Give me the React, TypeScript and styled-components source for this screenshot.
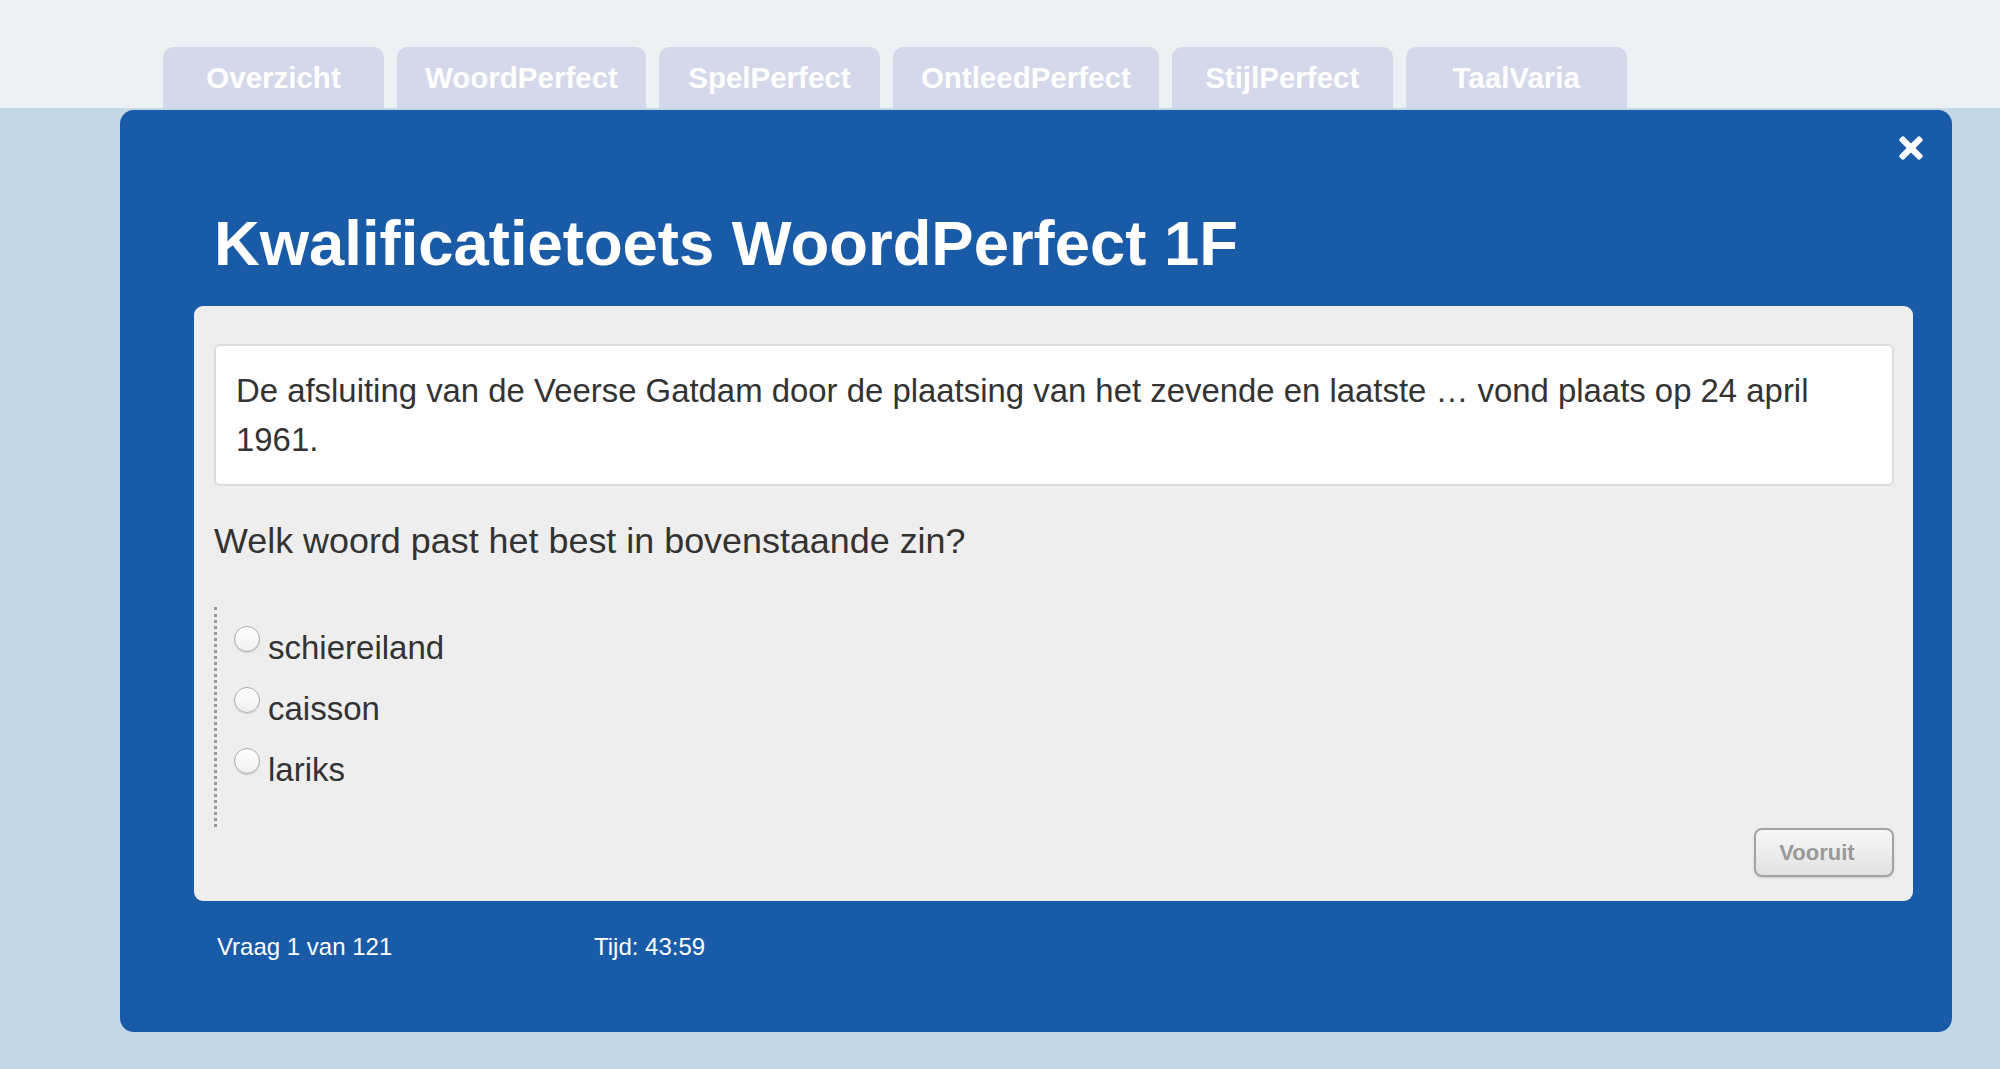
import styled, { createGlobalStyle } from "styled-components";
import { FaTimes } from "react-icons/fa";

const tabs = ["Overzicht", "WoordPerfect", "SpelPerfect", "OntleedPerfect", "StijlPerfect", "TaalVaria"];
const options = ["schiereiland", "caisson", "lariks"];

const GlobalStyle = createGlobalStyle`
    html, body {
        margin: 0;
        padding: 0;
        background: #c3d8e7;
        font-family: "Liberation Sans", Arial, sans-serif;
    }
    * { box-sizing: border-box; }
`;

const App = () => {
    return <Page>
        <GlobalStyle />
        <Header>
            <TabList>
                {tabs.map(tab => <Tab key={tab}>{tab}</Tab>)}
            </TabList>
        </Header>
        <Panel>
            <CloseButton aria-label="Sluiten">
                <FaTimes />
            </CloseButton>
            <Title>Kwalificatietoets WoordPerfect 1F</Title>
            <Card>
                <SentenceBox>
                    De afsluiting van de Veerse Gatdam door de plaatsing van het zevende en laatste … vond plaats op 24 april 1961.
                </SentenceBox>
                <Question>Welk woord past het best in bovenstaande zin?</Question>
                <OptionList>
                    {options.map(option => (
                        <OptionRow key={option}>
                            <Radio />
                            <OptionLabel>{option}</OptionLabel>
                        </OptionRow>
                    ))}
                </OptionList>
                <ButtonRow>
                    <NextButton>Vooruit</NextButton>
                </ButtonRow>
            </Card>
            <Footer>
                <FooterItem $width={377}>Vraag 1 van 121</FooterItem>
                <FooterItem>Tijd: 43:59</FooterItem>
            </Footer>
        </Panel>
    </Page>
};

export default App;

const Page = styled.div({
    minHeight: '1069px',
    paddingBottom: '38px',
});

const Header = styled.div({
    background: '#edf1f4',
    height: '108px',
    paddingTop: '47px',
    paddingLeft: '163px',
});

const TabList = styled.div({
    display: 'flex',
    gap: '13px',
});

const Tab = styled.div({
    minWidth: '221px',
    height: '61px',
    padding: '0 28px',
    display: 'flex',
    alignItems: 'center',
    justifyContent: 'center',
    background: '#d5d8ea',
    borderRadius: '10px 10px 0 0',
    color: 'white',
    fontWeight: 'bold',
    fontSize: '29.5px',
});

const Panel = styled.div({
    position: 'relative',
    marginTop: '2px',
    marginLeft: '120px',
    width: '1832px',
    background: '#1a5ba8',
    borderRadius: '14px',
    padding: '101px 39px 71px 74px',
});

const CloseButton = styled.button({
    position: 'absolute',
    top: '21px',
    right: '24px',
    background: 'transparent',
    border: 'none',
    padding: 0,
    color: 'white',
    fontSize: '34px',
    display: 'flex',
    cursor: 'pointer',
});

const Title = styled.h1({
    margin: '0 0 31px 20px',
    color: 'white',
    fontSize: '63.4px',
    lineHeight: '64px',
    fontWeight: 'bold',
});

const Card = styled.div({
    background: '#eeeeee',
    borderRadius: '9px',
    padding: '38px 19px 24px 20px',
});

const SentenceBox = styled.div({
    background: 'white',
    border: '2px solid #dcdcdc',
    borderRadius: '6px',
    padding: '20px 20px',
    color: '#333',
    fontSize: '32.9px',
    lineHeight: '49px',
});

const Question = styled.div({
    marginTop: '34px',
    color: '#333',
    fontSize: '35.9px',
    lineHeight: '43px',
});

const OptionList = styled.div({
    marginTop: '44px',
    borderLeft: '3px dotted #999',
    padding: '19px 0 18px 17px',
});

const OptionRow = styled.label({
    display: 'flex',
    alignItems: 'flex-start',
    gap: '8px',
    height: '61px',
});

const Radio = styled.span({
    width: '26px',
    height: '26px',
    borderRadius: '50%',
    border: '1px solid #ababab',
    background: 'linear-gradient(#ffffff, #f0f0f0)',
    boxShadow: '0 1px 1px rgba(0,0,0,0.12)',
    flexShrink: 0,
});

const OptionLabel = styled.span({
    marginTop: '2px',
    color: '#333',
    fontSize: '33px',
    lineHeight: '40px',
});

const ButtonRow = styled.div({
    display: 'flex',
    justifyContent: 'flex-end',
    marginTop: '1px',
});

const NextButton = styled.button({
    width: '140px',
    height: '49px',
    border: '2px solid #a3a3a3',
    borderRadius: '8px',
    background: 'linear-gradient(#f7f7f7, #e2e2e2)',
    boxShadow: '0 1px 2px rgba(0,0,0,0.15)',
    color: '#999999',
    fontFamily: '"Liberation Sans", Arial, sans-serif',
    fontWeight: 'bold',
    fontSize: '22px',
    paddingRight: '20px',
    cursor: 'pointer',
});

const Footer = styled.div({
    display: 'flex',
    marginTop: '32px',
    paddingLeft: '23px',
});

const FooterItem = styled.span<{$width?: number}>(props => ({
    width: props.$width ? `${props.$width}px` : 'auto',
    color: 'white',
    fontSize: '24px',
    lineHeight: '28px',
}));
